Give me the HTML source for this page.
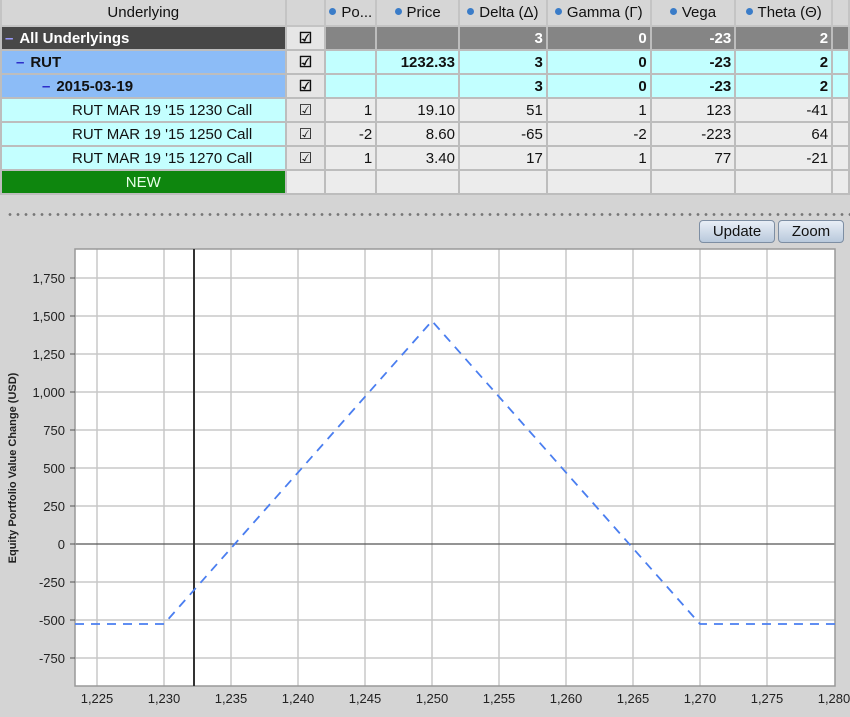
<!DOCTYPE html>
<html><head><meta charset="utf-8"><style>
body{margin:0;width:850px;height:717px;background:#d4d4d4;font-family:"Liberation Sans",sans-serif;overflow:hidden;position:relative}
table{position:absolute;left:0;top:0;border-collapse:collapse;table-layout:fixed;font-size:15px}
td{border:2px solid #bdbdbd;height:22px;padding:0 3px;white-space:nowrap;overflow:hidden;text-align:right;color:#111}
tr.h td{height:25px;background:#d6d6d6;text-align:center;border-color:#c4c4c4;border-top:none}
.dot{display:inline-block;width:7px;height:7px;border-radius:50%;background:#3a7cc8;margin-right:5px;vertical-align:2px}
.all td{background:#858585;color:#fff;font-weight:bold}
.all td.n{background:#474747;text-align:left}
.all td.c,.r td.c,.l td.c{background:#e6e6e6;text-align:center}
.r td{background:#c2ffff;font-weight:bold}
.r td.n{background:#8cbcf7;text-align:left}
.l td{background:#ececec}
.l td.n{background:#c4ffff;text-align:left;padding-left:70px}
.new td{background:#ececec}
.new td.n{background:#0e860e;color:#e8ffe8;text-align:center}
.m{color:#2b2bc8;font-weight:bold;margin-right:6px}
.btn{position:absolute;top:220px;height:21px;border:1px solid #7d8ea3;border-radius:4px;background:linear-gradient(#e8eef6,#b9c9dc);font-size:15px;text-align:center;line-height:21px;color:#111}
</style></head><body>
<table>
<colgroup><col style="width:285px"><col style="width:40px"><col style="width:51px"><col style="width:83px"><col style="width:88px"><col style="width:104px"><col style="width:85px"><col style="width:97px"><col style="width:17px"></colgroup>
<tr class="h"><td>Underlying</td><td></td><td><span class="dot"></span>Po...</td><td><span class="dot"></span>Price</td><td><span class="dot"></span>Delta (Δ)</td><td><span class="dot"></span>Gamma (Γ)</td><td><span class="dot"></span>Vega</td><td><span class="dot"></span>Theta (Θ)</td><td></td></tr>
<tr class="all"><td class="n"><span class="m" style="color:#9b9bff">–</span>All Underlyings</td><td class="c" style="color:#111">☑</td><td></td><td></td><td>3</td><td>0</td><td>-23</td><td>2</td><td></td></tr>
<tr class="r"><td class="n" style="padding-left:14px"><span class="m">–</span>RUT</td><td class="c">☑</td><td></td><td>1232.33</td><td>3</td><td>0</td><td>-23</td><td>2</td><td></td></tr>
<tr class="r"><td class="n" style="padding-left:40px"><span class="m">–</span>2015-03-19</td><td class="c">☑</td><td></td><td></td><td>3</td><td>0</td><td>-23</td><td>2</td><td></td></tr>
<tr class="l"><td class="n">RUT MAR 19 '15 1230 Call</td><td class="c">☑</td><td>1</td><td>19.10</td><td>51</td><td>1</td><td>123</td><td>-41</td><td></td></tr>
<tr class="l"><td class="n">RUT MAR 19 '15 1250 Call</td><td class="c">☑</td><td>-2</td><td>8.60</td><td>-65</td><td>-2</td><td>-223</td><td>64</td><td></td></tr>
<tr class="l"><td class="n">RUT MAR 19 '15 1270 Call</td><td class="c">☑</td><td>1</td><td>3.40</td><td>17</td><td>1</td><td>77</td><td>-21</td><td></td></tr>
<tr class="new"><td class="n">NEW</td><td></td><td></td><td></td><td></td><td></td><td></td><td></td><td></td></tr>
</table>
<div style="position:absolute;left:6px;top:213px;width:844px;height:3px;background:radial-gradient(circle,#777 1.2px,transparent 1.6px) 0 0/8px 3px repeat-x"></div>
<div class="btn" style="left:699px;width:74px">Update</div>
<div class="btn" style="left:778px;width:64px">Zoom</div>
<svg style="position:absolute;left:0;top:0" width="850" height="717" font-family="Liberation Sans, sans-serif" font-size="13" fill="#222">
<rect x="75" y="249" width="760" height="437" fill="#fff"/>
<g stroke="#c8c8c8" stroke-width="1.5">
<line x1="97" y1="249" x2="97" y2="686"/><line x1="164" y1="249" x2="164" y2="686"/><line x1="231" y1="249" x2="231" y2="686"/><line x1="298" y1="249" x2="298" y2="686"/><line x1="365" y1="249" x2="365" y2="686"/><line x1="432" y1="249" x2="432" y2="686"/><line x1="499" y1="249" x2="499" y2="686"/><line x1="566" y1="249" x2="566" y2="686"/><line x1="633" y1="249" x2="633" y2="686"/><line x1="700" y1="249" x2="700" y2="686"/><line x1="767" y1="249" x2="767" y2="686"/>
<line x1="75" y1="278" x2="835" y2="278"/><line x1="75" y1="316" x2="835" y2="316"/><line x1="75" y1="354" x2="835" y2="354"/><line x1="75" y1="392" x2="835" y2="392"/><line x1="75" y1="430" x2="835" y2="430"/><line x1="75" y1="468" x2="835" y2="468"/><line x1="75" y1="506" x2="835" y2="506"/><line x1="75" y1="582" x2="835" y2="582"/><line x1="75" y1="620" x2="835" y2="620"/><line x1="75" y1="658" x2="835" y2="658"/>
</g>
<line x1="75" y1="544" x2="835" y2="544" stroke="#555" stroke-width="1.2"/>
<rect x="75" y="249" width="760" height="437" fill="none" stroke="#999" stroke-width="1.5"/>
<line x1="194" y1="249" x2="194" y2="686" stroke="#333" stroke-width="2"/>
<polyline points="75,624 164,624 432,321 700,624 835,624" fill="none" stroke="#4a7ef0" stroke-width="1.8" stroke-dasharray="9,7"/>
<g text-anchor="end">
<text x="65" y="283">1,750</text><text x="65" y="321">1,500</text><text x="65" y="359">1,250</text><text x="65" y="397">1,000</text><text x="65" y="435">750</text><text x="65" y="473">500</text><text x="65" y="511">250</text><text x="65" y="549">0</text><text x="65" y="587">-250</text><text x="65" y="625">-500</text><text x="65" y="663">-750</text>
</g>
<g stroke="#555"><line x1="70" y1="278" x2="75" y2="278"/><line x1="70" y1="316" x2="75" y2="316"/><line x1="70" y1="354" x2="75" y2="354"/><line x1="70" y1="392" x2="75" y2="392"/><line x1="70" y1="430" x2="75" y2="430"/><line x1="70" y1="468" x2="75" y2="468"/><line x1="70" y1="506" x2="75" y2="506"/><line x1="70" y1="544" x2="75" y2="544"/><line x1="70" y1="582" x2="75" y2="582"/><line x1="70" y1="620" x2="75" y2="620"/><line x1="70" y1="658" x2="75" y2="658"/></g>
<g text-anchor="middle">
<text x="97" y="703">1,225</text><text x="164" y="703">1,230</text><text x="231" y="703">1,235</text><text x="298" y="703">1,240</text><text x="365" y="703">1,245</text><text x="432" y="703">1,250</text><text x="499" y="703">1,255</text><text x="566" y="703">1,260</text><text x="633" y="703">1,265</text><text x="700" y="703">1,270</text><text x="767" y="703">1,275</text><text x="834" y="703">1,280</text>
</g>
<text transform="translate(16,468) rotate(-90)" text-anchor="middle" font-size="11" font-weight="bold">Equity Portfolio Value Change (USD)</text>
</svg>
</body></html>
